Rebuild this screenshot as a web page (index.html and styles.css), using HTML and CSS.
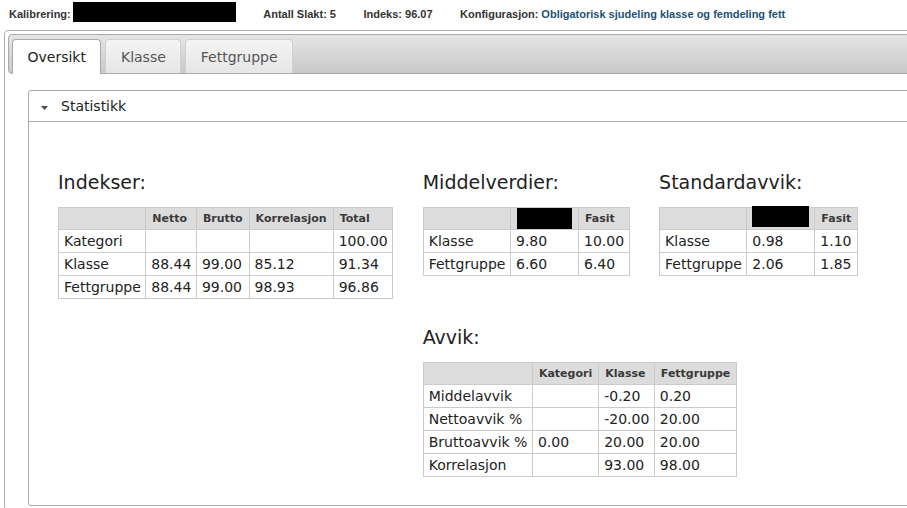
FILE: index.html
```html
<!DOCTYPE html>
<html lang="no">
<head>
<meta charset="utf-8">
<title>Kalibrering – Oversikt</title>
<link rel="stylesheet" href="styles.css">
</head>
<body>
<header class="meta">
  <div class="meta-item">Kalibrering:<span class="redact redact-name"></span></div>
  <div class="meta-item">Antall Slakt: 5</div>
  <div class="meta-item">Indeks: 96.07</div>
  <div class="meta-item">Konfigurasjon: <span class="meta-value">Obligatorisk sjudeling klasse og femdeling fett</span></div>
</header>

<div class="tabs">
  <ul class="tab-bar">
    <li class="tab tab-active">Oversikt</li>
    <li class="tab">Klasse</li>
    <li class="tab">Fettgruppe</li>
  </ul>

  <div class="tab-panel">
    <section class="box">
      <div class="box-head">
        <svg class="caret" width="7" height="4" viewBox="0 0 7 4"><polygon points="0,0 7,0 3.5,4" fill="#4a4a4a"/></svg>
        <span>Statistikk</span>
      </div>

      <div class="stats">
        <div class="stat">
          <h3 class="stat-title">Indekser:</h3>
          <table class="grid">
            <tr><th></th><th>Netto</th><th>Brutto</th><th>Korrelasjon</th><th>Total</th></tr>
            <tr><td>Kategori</td><td></td><td></td><td></td><td>100.00</td></tr>
            <tr><td>Klasse</td><td>88.44</td><td>99.00</td><td>85.12</td><td>91.34</td></tr>
            <tr><td>Fettgruppe</td><td>88.44</td><td>99.00</td><td>98.93</td><td>96.86</td></tr>
          </table>
        </div>

        <div class="stat">
          <h3 class="stat-title">Middelverdier:</h3>
          <table class="grid">
            <tr><th></th><th><span class="redact redact-head"></span></th><th>Fasit</th></tr>
            <tr><td>Klasse</td><td>9.80</td><td>10.00</td></tr>
            <tr><td>Fettgruppe</td><td>6.60</td><td>6.40</td></tr>
          </table>
        </div>

        <div class="stat">
          <h3 class="stat-title">Standardavvik:</h3>
          <table class="grid">
            <tr><th></th><th><span class="redact redact-head redact-high"></span></th><th>Fasit</th></tr>
            <tr><td>Klasse</td><td>0.98</td><td>1.10</td></tr>
            <tr><td>Fettgruppe</td><td>2.06</td><td>1.85</td></tr>
          </table>
        </div>

        <div class="stat stat-wide">
          <h3 class="stat-title">Avvik:</h3>
          <table class="grid">
            <tr><th></th><th>Kategori</th><th>Klasse</th><th>Fettgruppe</th></tr>
            <tr><td>Middelavvik</td><td></td><td>-0.20</td><td>0.20</td></tr>
            <tr><td>Nettoavvik %</td><td></td><td>-20.00</td><td>20.00</td></tr>
            <tr><td>Bruttoavvik %</td><td>0.00</td><td>20.00</td><td>20.00</td></tr>
            <tr><td>Korrelasjon</td><td></td><td>93.00</td><td>98.00</td></tr>
          </table>
        </div>
      </div>
    </section>
  </div>
</div>
</body>
</html>
```

FILE: styles.css
```css
html, body {
  margin: 0;
  padding: 0;
  background: #fff;
  overflow: hidden;
}

body {
  font-family: "DejaVu Sans", Verdana, sans-serif;
  color: #222;
}

/* top meta line */
.meta {
  display: flex;
  align-items: flex-start;
  gap: 27.5px;
  height: 30px;
  padding-left: 9px;
  font-family: "Liberation Sans", Arial, sans-serif;
  font-size: 11px;
  font-weight: bold;
  color: #333;
}

.meta-item {
  margin-top: 8px;
  line-height: 13px;
  white-space: nowrap;
}

.meta-value {
  color: #1d5273;
}

.redact {
  display: inline-block;
  background: #000;
  vertical-align: top;
}

.redact-name {
  width: 163px;
  height: 20px;
  margin: -6px 0 0 2px;
}

.redact-head {
  width: 55px;
  height: 21px;
  margin: -4px 0 -4px 0;
}

.redact-high {
  width: 57px;
  margin: -6px -1px -2px -1px;
}

/* tabs widget */
.tabs {
  width: 1000px;
  margin-left: 4px;
  padding: 3px;
  border: 1px solid #aaa;
  border-radius: 4px;
}

.tab-bar {
  display: flex;
  align-items: flex-end;
  gap: 4px;
  height: 34px;
  margin: 0;
  padding: 4px 3px 0;
  list-style: none;
  border: 1px solid #aaa;
  border-radius: 4px;
  background: linear-gradient(#e5e5e5, #c9c9c9);
}

.tab {
  padding: 9px 14.5px 8px;
  line-height: 16px;
  font-size: 14px;
  color: #555;
  border: 1px solid #d0d0d0;
  border-bottom: 0;
  border-radius: 4px 4px 0 0;
  background: linear-gradient(#f4f4f4, #e6e6e6);
}

.tab-active {
  padding-bottom: 9px;
  margin-bottom: -1px;
  color: #222;
  background: #fff;
  border-color: #aaa;
}

.tab-panel {
  padding: 16px 20px 0;
}

/* collapsible box */
.box {
  border: 1px solid #aaa;
  border-radius: 3px;
}

.box-head {
  display: flex;
  align-items: center;
  height: 30px;
  padding-left: 12px;
  border-bottom: 1px solid #aaa;
  font-size: 14px;
  line-height: 16px;
  color: #222;
}

.caret {
  margin: 3px 13px 0 0;
}

.stats {
  display: grid;
  grid-template-columns: auto auto auto;
  justify-content: start;
  align-items: start;
  column-gap: 29.5px;
  row-gap: 27px;
  padding: 49px 29px 28px;
}

.stat-wide {
  grid-column: 2 / span 2;
}

.stat-title {
  margin: 0 0 14px;
  font-size: 19px;
  font-weight: normal;
  line-height: 22px;
  color: #222;
}

.grid {
  border-collapse: collapse;
  font-size: 14px;
  color: #222;
}

.grid th,
.grid td {
  border: 1px solid #cbcbcb;
  text-align: left;
  white-space: nowrap;
}

.grid th {
  padding: 4px 6px;
  font-size: 11px;
  font-weight: bold;
  color: #3a3a3a;
  background: #dcdcdc;
}

.grid td {
  padding: 3px 4.5px 3px 5px;
}
```
